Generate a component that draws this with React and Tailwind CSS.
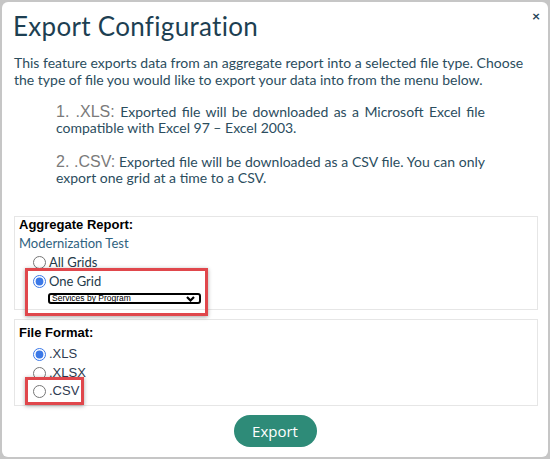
import React, { useState } from 'react';

const headFont = { fontFamily: 'Lato, "Noto Sans", sans-serif' };
const arial = { fontFamily: '"Liberation Sans", Arial, sans-serif' };

const Radio = ({ checked, onChange, label, labelClass }) => (
  <label className="flex items-center gap-[3px] cursor-pointer">
    <input
      type="radio"
      checked={checked}
      onChange={onChange}
      className="m-0 w-[13px] h-[13px] accent-[#3b78e7]"
    />
    <span className={labelClass}>{label}</span>
  </label>
);

const ListItem = ({ prefix, first, rest, className }) => (
  <li className={className}>
    <span className="block whitespace-nowrap text-justify [text-align-last:justify]">
      <span className="text-[16px] leading-[16px] text-[#7a7a7a]" style={arial}>
        {prefix}
      </span>{' '}
      {first}
    </span>
    <span className="block">{rest}</span>
  </li>
);

const App = () => {
  const [grid, setGrid] = useState('one');
  const [format, setFormat] = useState('xls');

  return (
    <div className="w-[550px] h-[459px] bg-[#c6c6c6] p-[2px]">
      <div className="relative h-full bg-white rounded-[6px] px-[12px] pt-[6px] text-[#1f4457]" style={headFont}>
        <button
          type="button"
          className="absolute right-[8px] top-[7px] text-[14px] font-bold leading-none text-[#1f4457]"
        >
          ×
        </button>

        <h1 className="ml-[-1px] text-[26px] leading-[36px] text-[#1d3f52] tracking-[0.3px]">Export Configuration</h1>

        <p className="mt-[10px] text-[14px] leading-[17px] text-[#2b4d5e]">
          This feature exports data from an aggregate report into a selected file type. Choose the type of file you
          would like to export your data into from the menu below.
        </p>

        <ol className="mt-[16px] pl-[42px] pr-[51px] text-[14px] leading-[16px] text-[#2b4d5e]">
          <ListItem
            prefix="1. .XLS:"
            first="Exported file will be downloaded as a Microsoft Excel file"
            rest="compatible with Excel 97 – Excel 2003."
          />
          <ListItem
            className="mt-[18px]"
            prefix="2. .CSV:"
            first="Exported file will be downloaded as a CSV file. You can only"
            rest="export one grid at a time to a CSV."
          />
        </ol>

        <div className="mt-[30px] mr-[-2px] border border-[#e6e6e6] pl-[4px] pt-0 h-[94px]">
          <div className="text-[13px] font-bold text-black leading-[16px]" style={arial}>
            Aggregate Report:
          </div>
          <div className="mt-[2px] text-[13px] leading-[16px] text-[#2f6280]">Modernization Test</div>
          <div className="pl-[14px] mt-[2px] text-[13px] leading-[18px] text-[#243a4a]">
            <Radio checked={grid === 'all'} onChange={() => setGrid('all')} label="All Grids" />
          </div>
          <div className="relative z-10 ml-[6px] mt-[-3px] w-[183px] border-[3px] border-[#e0474c] shadow-[0_1px_4px_rgba(0,0,0,0.35)] pl-[5px] pt-[1px] pb-[9px]">
            <div className="text-[13px] leading-[18px] text-[#243a4a]">
              <Radio checked={grid === 'one'} onChange={() => setGrid('one')} label="One Grid" />
            </div>
            <div
              className="mt-[3px] ml-[15px] w-[153px] h-[11px] border-2 border-black rounded-[3px] flex items-center justify-between pl-[2px] pr-[4px]"
              style={arial}
            >
              <span className="text-[8.5px] leading-none text-black">Services by Program</span>
              <svg width="9" height="6" viewBox="0 0 9 6">
                <path d="M1 1 L4.5 4.5 L8 1" fill="none" stroke="black" strokeWidth="2.2" />
              </svg>
            </div>
          </div>
        </div>

        <div className="mt-[9px] mr-[-2px] border border-[#e6e6e6] pl-[4px] pt-[5px] h-[87px]">
          <div className="text-[13px] font-bold text-black leading-[16px]" style={arial}>
            File Format:
          </div>
          <div
            className="pl-[14px] mt-[4px] flex flex-col gap-[1px] text-[13px] leading-[18px] text-[#2d3a4f]"
            style={arial}
          >
            <Radio checked={format === 'xls'} onChange={() => setFormat('xls')} label=".XLS" />
            <Radio checked={format === 'xlsx'} onChange={() => setFormat('xlsx')} label=".XLSX" />
          </div>
          <div
            className="relative z-10 ml-[6px] mt-[-5px] w-[59px] border-[3px] border-[#e0474c] shadow-[0_1px_4px_rgba(0,0,0,0.35)] pl-[5px] py-[2px] text-[13px] leading-[18px] text-[#2d3a4f]"
            style={arial}
          >
            <Radio checked={format === 'csv'} onChange={() => setFormat('csv')} label=".CSV" />
          </div>
        </div>

        <div className="flex justify-center mt-[9px]">
          <button
            type="button"
            className="w-[83px] h-[32px] rounded-full bg-[#2e8b78] text-white text-[15px]"
            style={{ fontFamily: '"Open Sans", sans-serif' }}
          >
            Export
          </button>
        </div>
      </div>
    </div>
  );
};

export default App;
